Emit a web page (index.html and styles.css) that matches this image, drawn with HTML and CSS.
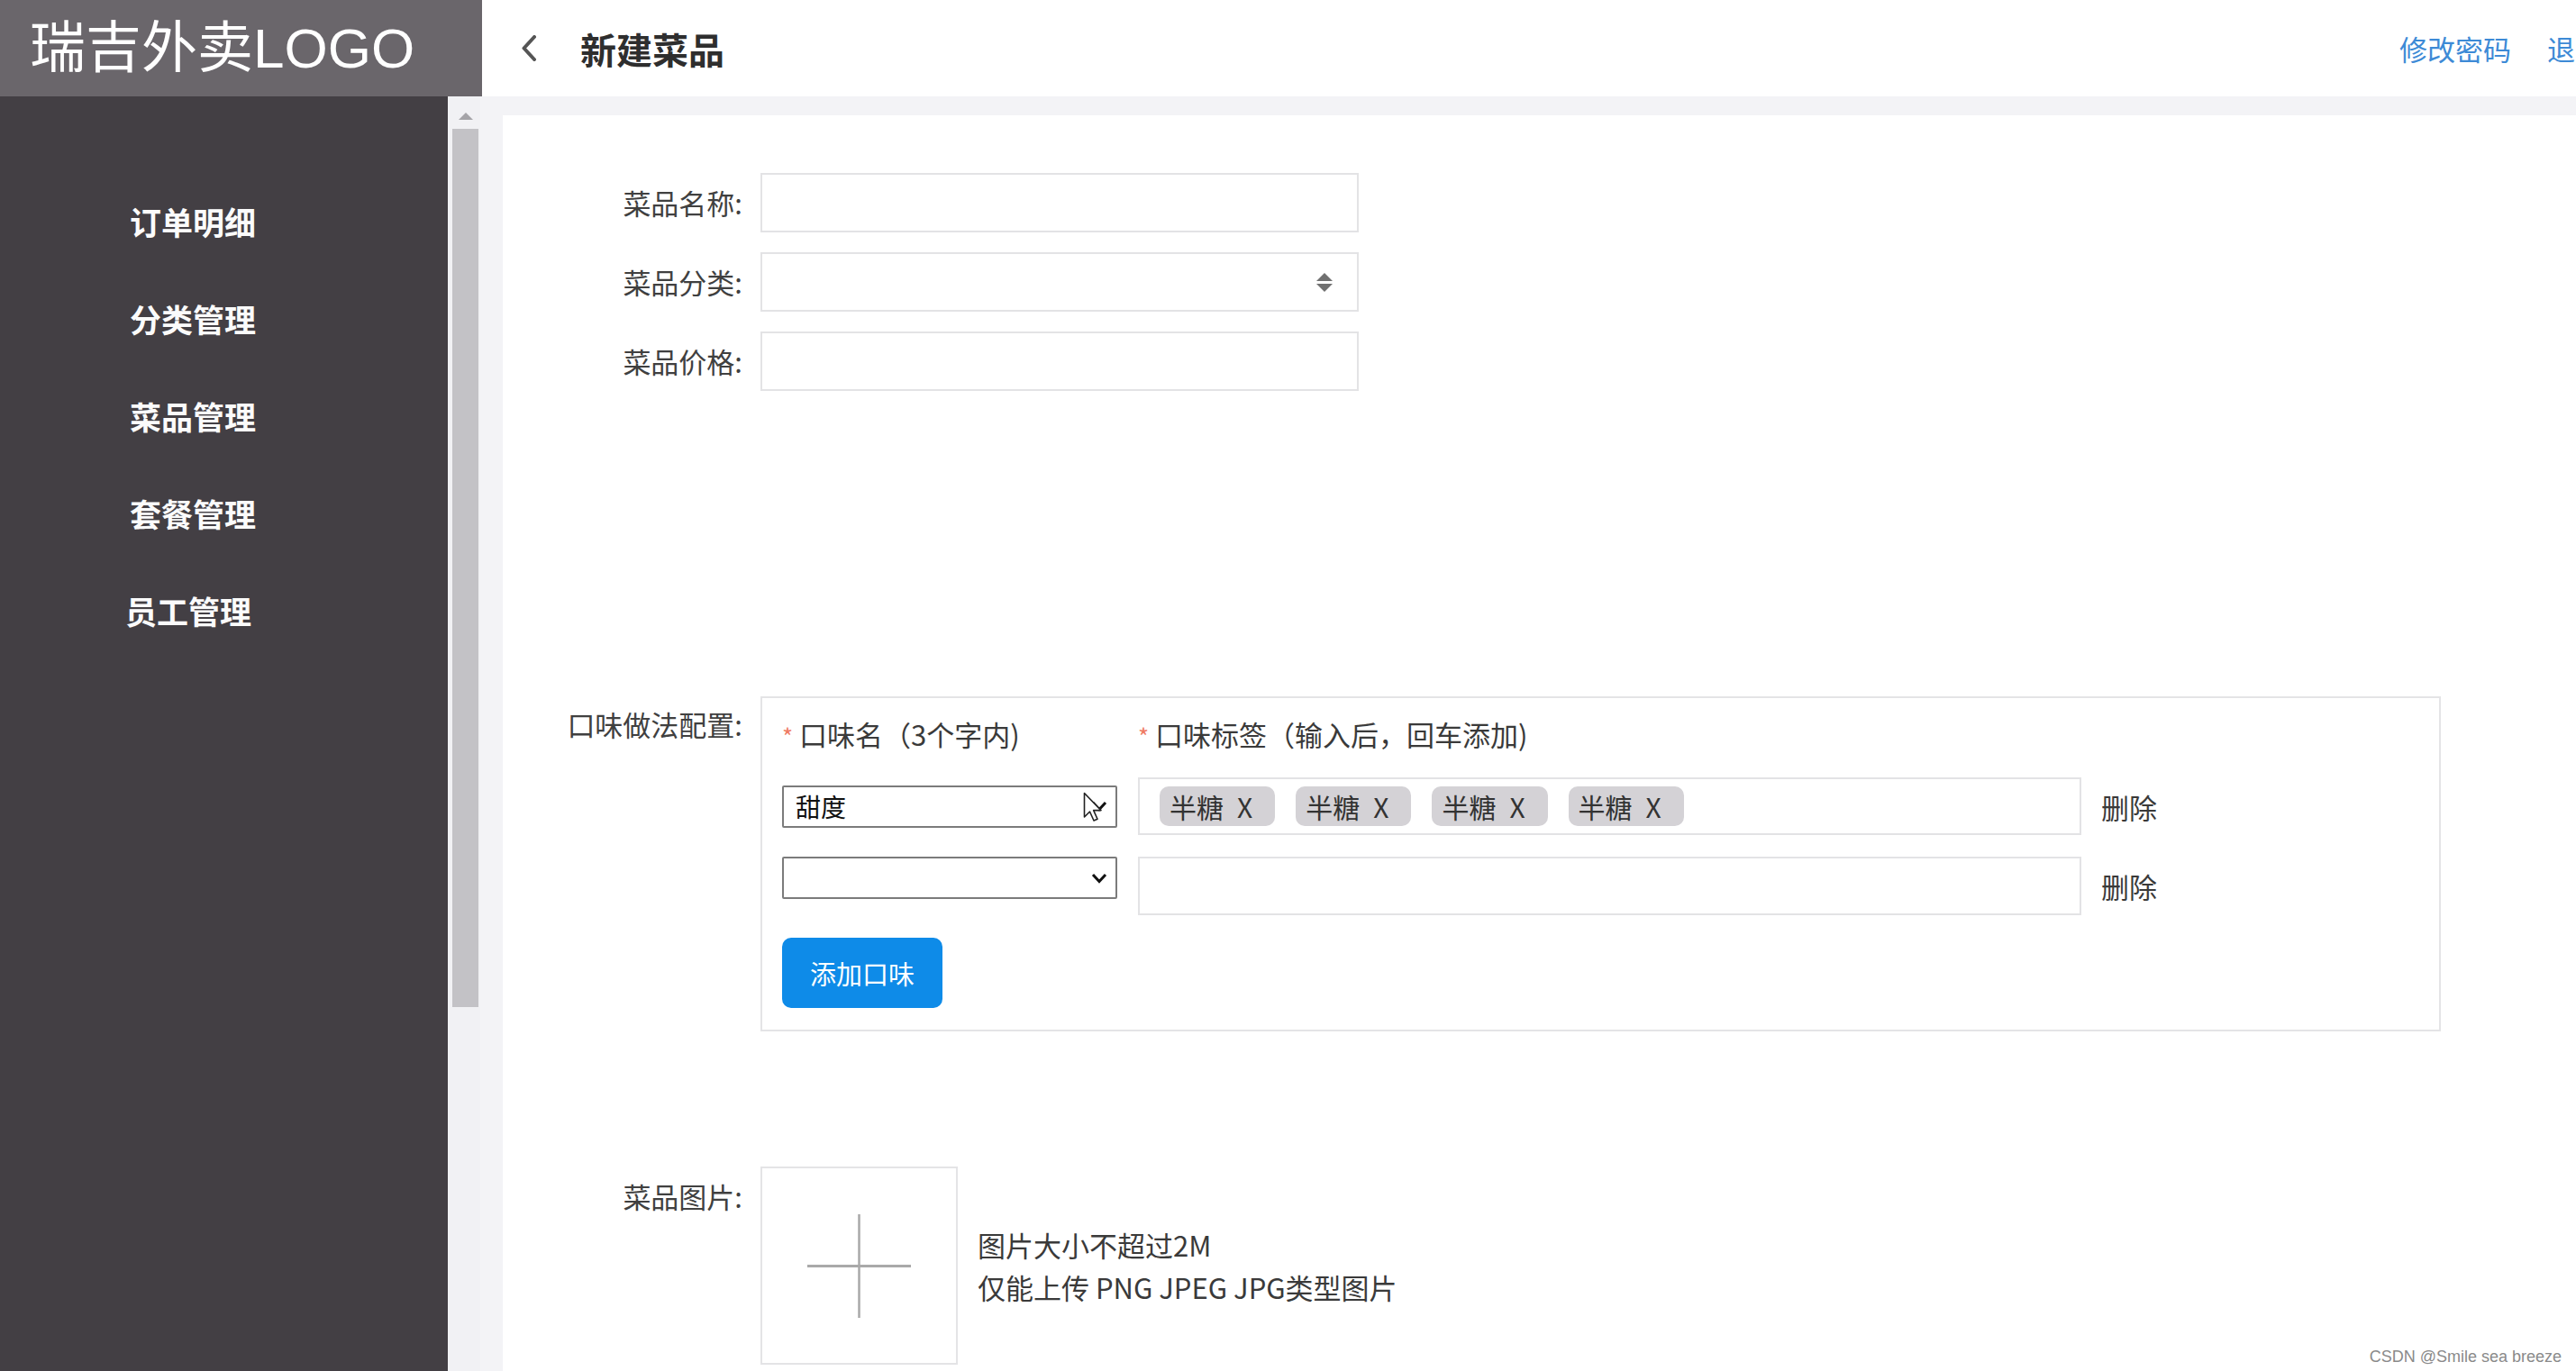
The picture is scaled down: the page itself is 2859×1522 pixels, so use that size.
FILE: index.html
```html
<!DOCTYPE html>
<html lang="zh-CN">
<head>
<meta charset="utf-8">
<title>新建菜品</title>
<link rel="stylesheet" href="styles.css">
</head>
<body>
<div class="app">
  <header class="topbar">
    <div class="logo">瑞吉外卖LOGO</div>
    <div class="topbar-main">
      <svg class="back-icon" width="18" height="29" viewBox="0 0 18 29"><polyline points="15,2 3.5,14.5 15,27" fill="none" stroke="#555" stroke-width="4" stroke-linejoin="round" stroke-linecap="round"/></svg>
      <h1 class="page-title">新建菜品</h1>
      <nav class="top-links">
        <a class="top-link">修改密码</a>
        <a class="top-link">退出</a>
      </nav>
    </div>
  </header>
  <div class="layout">
    <aside class="sidebar">
      <ul class="menu">
        <li class="menu-item">订单明细</li>
        <li class="menu-item">分类管理</li>
        <li class="menu-item">菜品管理</li>
        <li class="menu-item">套餐管理</li>
        <li class="menu-item menu-item--shift">员工管理</li>
      </ul>
    </aside>
    <div class="scrollbar">
      <div class="scroll-arrow"></div>
      <div class="scroll-thumb"></div>
    </div>
    <main class="main">
      <div class="panel">
        <form class="dish-form">
          <div class="form-row">
            <label class="form-label">菜品名称:</label>
            <div class="text-input"></div>
          </div>
          <div class="form-row">
            <label class="form-label">菜品分类:</label>
            <div class="text-input select-input">
              <svg width="18" height="21" viewBox="0 0 18 21"><polygon points="9,0 18,9 0,9" fill="#707070"/><polygon points="0,12 18,12 9,21" fill="#707070"/></svg>
            </div>
          </div>
          <div class="form-row">
            <label class="form-label">菜品价格:</label>
            <div class="text-input"></div>
          </div>

          <div class="form-row form-row--flavor">
            <label class="form-label">口味做法配置:</label>
            <div class="flavor-box">
              <div class="flavor-head">
                <div class="flavor-head-name"><span class="req">*</span> 口味名（3个字内)</div>
                <div class="flavor-head-tags"><span class="req">*</span> 口味标签（输入后，回车添加)</div>
              </div>
              <div class="flavor-row">
                <div class="native-select">
                  <span class="select-value">甜度</span>
                  <svg class="select-chevron" width="18" height="12" viewBox="0 0 18 12"><polyline points="2,2 9,9.5 16,2" fill="none" stroke="#111" stroke-width="3"/></svg>
                  <svg class="cursor" width="22" height="34" viewBox="0 0 22 34"><path d="M1.5 1.5 L1.5 28 L7.5 22 L12 32 L16 30.3 L11.7 20.6 L20 20.6 Z" fill="#fff" stroke="#222" stroke-width="1.6" stroke-linejoin="round"/></svg>
                </div>
                <div class="tag-input">
                  <span class="tag">半糖<span class="tag-x">X</span></span>
                  <span class="tag">半糖<span class="tag-x">X</span></span>
                  <span class="tag">半糖<span class="tag-x">X</span></span>
                  <span class="tag">半糖<span class="tag-x">X</span></span>
                </div>
                <span class="del-link">删除</span>
              </div>
              <div class="flavor-row flavor-row--empty">
                <div class="native-select">
                  <svg class="select-chevron" width="18" height="12" viewBox="0 0 18 12"><polyline points="2,2 9,9.5 16,2" fill="none" stroke="#111" stroke-width="3"/></svg>
                </div>
                <div class="tag-input tag-input--empty"></div>
                <span class="del-link">删除</span>
              </div>
              <button type="button" class="btn-primary">添加口味</button>
            </div>
          </div>

          <div class="form-row form-row--upload">
            <label class="form-label">菜品图片:</label>
            <div class="upload-box">
              <svg width="115" height="115" viewBox="0 0 115 115"><line x1="57.5" y1="0" x2="57.5" y2="115" stroke="#a9a9a9" stroke-width="2.5"/><line x1="0" y1="57.5" x2="115" y2="57.5" stroke="#a9a9a9" stroke-width="3"/></svg>
            </div>
            <div class="upload-hint">
              <p>图片大小不超过2M</p>
              <p>仅能上传 PNG JPEG JPG类型图片</p>
            </div>
          </div>
        </form>
      </div>
    </main>
  </div>
  <div class="watermark">CSDN @Smile sea breeze</div>
</div>
</body>
</html>
```
FILE: styles.css
```css
* { box-sizing: border-box; margin: 0; padding: 0; }

html, body {
  width: 2859px;
  height: 1522px;
  overflow: hidden;
}

body {
  font-family: "Noto Sans CJK SC", "Liberation Sans", sans-serif;
  color: #3d3d3d;
  background: #f3f3f6;
}

.app {
  position: relative;
  display: flex;
  flex-direction: column;
  height: 1522px;
}

/* ---------- top bar ---------- */
.topbar {
  flex-shrink: 0;
  height: 107px;
  display: flex;
  background: #fff;
}

.logo {
  width: 535px;
  flex-shrink: 0;
  background: #6a666b;
  color: #fff;
  font-family: "Liberation Sans", "Noto Sans CJK SC", sans-serif;
  font-size: 62px;
  line-height: 107px;
  padding-left: 33px;
  white-space: nowrap;
}

.topbar-main {
  flex: 1;
  display: flex;
  align-items: center;
  padding-left: 43px;
}

.back-icon { margin-right: 48px; }

.page-title {
  font-size: 40px;
  font-weight: 700;
  color: #2e2e2e;
  line-height: 1;
}

.top-links {
  margin-left: auto;
  margin-right: -30px;
  display: flex;
  gap: 40px;
  white-space: nowrap;
}

.top-link {
  font-size: 31px;
  color: #3d8ad6;
}

/* ---------- layout ---------- */
.layout {
  flex: 1;
  display: flex;
  min-height: 0;
}

.sidebar {
  width: 497px;
  flex-shrink: 0;
  background: #433f44;
  padding: 85px 0 0 144px;
}

.menu { list-style: none; }

.menu-item {
  font-size: 35px;
  font-weight: 700;
  color: #fbfbfb;
  line-height: 108px;
  white-space: nowrap;
}

.menu-item--shift { margin-left: -5px; }

.scrollbar {
  width: 36px;
  flex-shrink: 0;
  background: #f1f1f4;
  display: flex;
  flex-direction: column;
  padding: 0 2px 0 5px;
}

.scroll-arrow {
  align-self: center;
  margin-top: 18px;
  width: 0;
  height: 0;
  border-left: 8px solid transparent;
  border-right: 8px solid transparent;
  border-bottom: 8px solid #a5a4a8;
}

.scroll-thumb {
  margin-top: 10px;
  height: 975px;
  background: #c3c2c6;
}

.main {
  flex: 1;
  padding: 21px 0 0 25px;
  background: #f3f3f6;
}

.panel {
  height: 100%;
  background: #fff;
  padding-top: 64px;
}

/* ---------- form ---------- */
.form-row {
  display: flex;
  align-items: flex-start;
  margin-bottom: 22px;
}

.form-label {
  width: 266px;
  flex-shrink: 0;
  margin-right: 20px;
  text-align: right;
  font-size: 31px;
  line-height: 66px;
  color: #404040;
  white-space: nowrap;
}

.text-input {
  width: 664px;
  height: 66px;
  border: 2px solid #e3e3e5;
  background: #fff;
}

.select-input {
  display: flex;
  align-items: center;
  justify-content: flex-end;
  padding-right: 27px;
}

.form-row--flavor { margin-top: 339px; margin-bottom: 0; }
.form-row--flavor .form-label { line-height: 62px; }

.flavor-box {
  width: 1865px;
  border: 2px solid #e4e4e6;
  padding: 20px 24px 24px 22px;
}

.flavor-head {
  display: flex;
  font-size: 31px;
  line-height: 40px;
  color: #3a3a3a;
  white-space: nowrap;
}

.flavor-head-name { width: 395px; }

.req {
  color: #ef7b63;
  font-size: 26px;
}

.flavor-row {
  display: flex;
  align-items: center;
  margin-top: 26px;
}

.flavor-row--empty { margin-top: 24px; }
.flavor-row--empty .native-select { align-self: flex-start; }

.native-select {
  position: relative;
  width: 372px;
  height: 47px;
  flex-shrink: 0;
  margin-right: 23px;
  border: 2px solid #7b7b7b;
  border-radius: 2px;
  background: #fff;
  display: flex;
  align-items: center;
  padding: 0 9px 0 13px;
}

.select-value {
  font-size: 28px;
  color: #111;
}

.select-chevron { margin-left: auto; }

.cursor {
  position: absolute;
  left: 332px;
  top: 5px;
}

.tag-input {
  width: 1047px;
  height: 64px;
  flex-shrink: 0;
  border: 2px solid #e3e3e5;
  background: #fff;
  display: flex;
  align-items: center;
  gap: 23px;
  padding-left: 22px;
}

.tag-input--empty { height: 65px; }

.tag {
  height: 44px;
  display: flex;
  align-items: center;
  padding: 0 25px 0 11px;
  border-radius: 10px;
  background: #d4d2d6;
  font-size: 30px;
  color: #333;
  white-space: nowrap;
}

.tag-x {
  margin-left: 15px;
  font-family: "Liberation Sans Narrow", "Noto Sans CJK SC", sans-serif;
}

.del-link {
  margin-left: 22px;
  font-size: 31px;
  color: #3a3a3a;
}

.btn-primary {
  margin-top: 25px;
  width: 178px;
  height: 78px;
  border: none;
  border-radius: 10px;
  background: #0e8be8;
  color: #fff;
  font-family: "Noto Sans CJK SC", sans-serif;
  font-size: 29px;
}

.form-row--upload { margin-top: 150px; }

.upload-box {
  width: 219px;
  height: 220px;
  flex-shrink: 0;
  border: 2px solid #e4e4e6;
  display: flex;
  align-items: center;
  justify-content: center;
}

.upload-hint {
  align-self: center;
  margin-left: 22px;
  font-size: 31px;
  line-height: 47px;
  color: #3a3a3a;
  white-space: nowrap;
}

/* ---------- watermark ---------- */
.watermark {
  position: absolute;
  right: 16px;
  bottom: 5px;
  font-family: "Liberation Sans", sans-serif;
  font-size: 18px;
  color: #8a8a8a;
  text-shadow: 0 0 2px #fff;
}
```
